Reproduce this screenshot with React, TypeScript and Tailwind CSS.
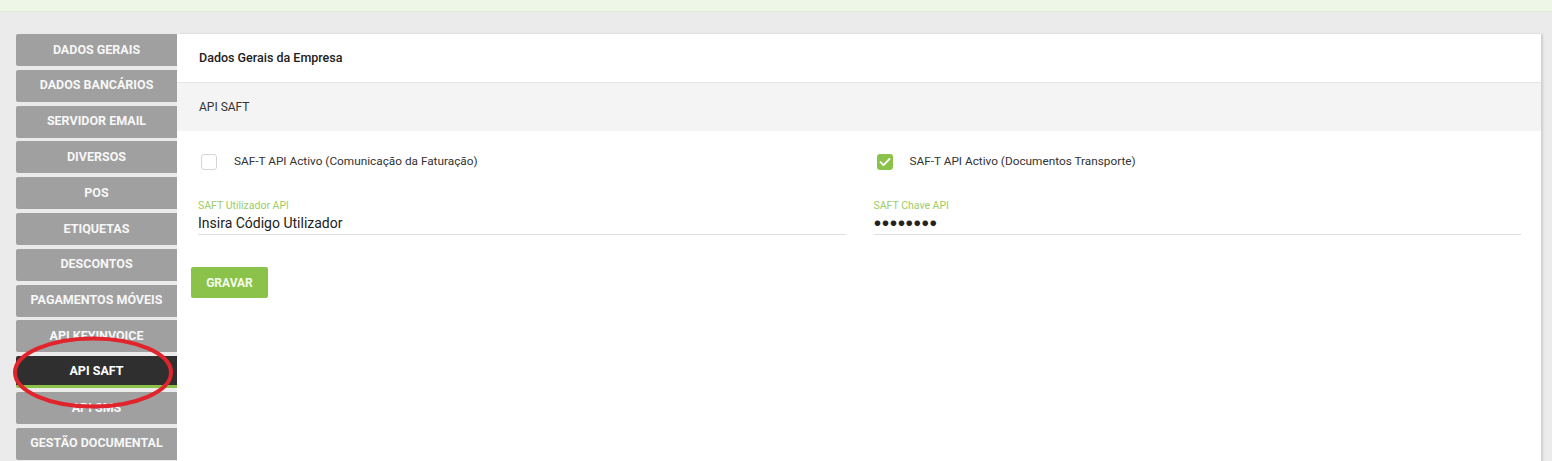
const menu = [
  "DADOS GERAIS",
  "DADOS BANCÁRIOS",
  "SERVIDOR EMAIL",
  "DIVERSOS",
  "POS",
  "ETIQUETAS",
  "DESCONTOS",
  "PAGAMENTOS MÓVEIS",
  "API KEYINVOICE",
  "API SAFT",
  "API SMS",
  "GESTÃO DOCUMENTAL",
];

const Check = () => (
  <svg viewBox="0 0 16 16" className="h-[16px] w-[16px]">
    <path d="M3.5 8.2l3 3 6-6.2" fill="none" stroke="#fff" strokeWidth="1.8" strokeLinecap="round" strokeLinejoin="round" />
  </svg>
);

export default function App() {
  return (
    <div className="relative min-h-[461px] w-[1552px] overflow-hidden bg-[#ebebeb] font-['Roboto',sans-serif]">
      <div className="h-[12px] border-b border-[#dfe8d6] bg-[#eef6e7]" />

      <div className="flex pl-[16px] pt-[22px]">
        <nav className="flex w-[161px] shrink-0 flex-col gap-[3.8px]">
          {menu.map((item) => {
            const active = item === "API SAFT";
            return (
              <div
                key={item}
                className={
                  active
                    ? "flex h-8 items-center justify-center rounded-l-[2px] border-b-[3px] border-[#8bc34a] bg-[#2f2f2f] pt-[2px] text-[12.5px] font-bold text-white"
                    : "flex h-8 items-center justify-center rounded-l-[2px] bg-[#a0a0a0] text-[12.5px] font-bold text-[#f7f7f7]"
                }
              >
                {item}
              </div>
            );
          })}
        </nav>

        <main className="min-h-[430px] w-[1364px] bg-white shadow-[2px_0_2px_rgba(0,0,0,0.12)]">
          <div className="flex h-[49px] items-center border-b border-[#e6e6e6] px-[22px] text-[12.5px] font-medium text-[#222]">
            Dados Gerais da Empresa
          </div>
          <div className="flex h-[48px] items-center bg-[#f4f4f4] px-[22px] text-[12px] text-[#333]">
            API SAFT
          </div>

          <div className="grid grid-cols-2 gap-x-[28px] pl-[21px] pr-[20px] pt-[23px]">
            <div>
              <label className="flex h-[16px] items-center pl-[3px]">
                <span className="h-[16px] w-[16px] rounded-[3px] border border-[#d6d6d6] bg-white" />
                <span className="ml-[17px] text-[11.8px] text-[#333]">SAF-T API Activo (Comunicação da Faturação)</span>
              </label>
              <div className="mt-[29px] text-[10.5px] leading-[14px] text-[#9ccc65]">SAFT Utilizador API</div>
              <div className="h-[22px] border-b border-[#dedede] pt-[1px] text-[14px] leading-[18px] text-[#222]">
                Insira Código Utilizador
              </div>
            </div>
            <div>
              <label className="flex h-[16px] items-center pl-[3px]">
                <span className="flex h-[16px] w-[16px] items-center justify-center rounded-[3px] bg-[#8bc34a]">
                  <Check />
                </span>
                <span className="ml-[17px] text-[11.8px] text-[#333]">SAF-T API Activo (Documentos Transporte)</span>
              </label>
              <div className="mt-[29px] text-[10.5px] leading-[14px] text-[#9ccc65]">SAFT Chave API</div>
              <div className="h-[22px] border-b border-[#dedede] pt-[1px] text-[13.2px] leading-[18px] text-[#222]">
                ●●●●●●●●
              </div>
            </div>
          </div>

          <div className="pl-[14px] pt-[32px]">
            <button className="h-[31px] w-[77px] rounded-[2px] bg-[#8bc34a] text-[12px] font-bold text-[#f4fbea]">
              GRAVAR
            </button>
          </div>
        </main>
      </div>

      <svg className="pointer-events-none absolute left-0 top-0" width="200" height="461">
        <ellipse cx="93" cy="372.5" rx="78" ry="34" fill="none" stroke="#e1242b" strokeWidth="4" />
      </svg>
    </div>
  );
}
